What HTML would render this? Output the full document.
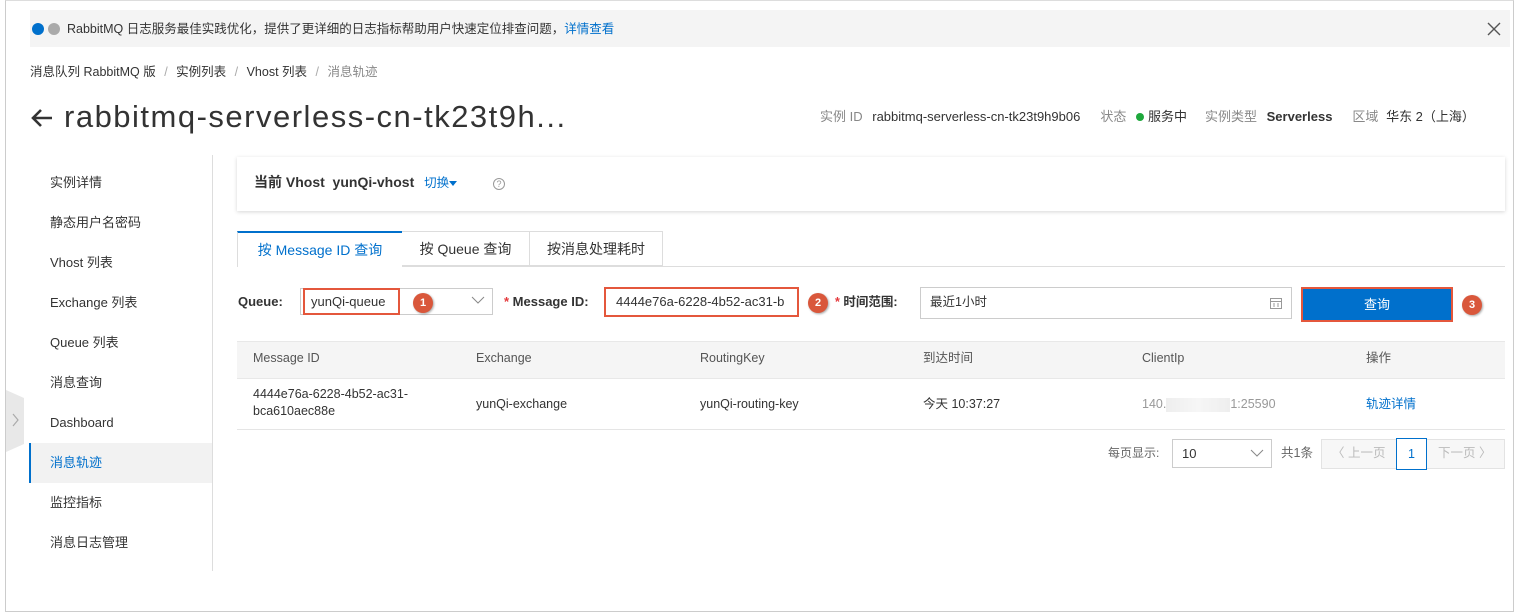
<!DOCTYPE html>
<html><head><meta charset="utf-8">
<style>
*{box-sizing:border-box;margin:0;padding:0}
body{width:1515px;height:613px;background:#fff;font-family:"Liberation Sans","Noto Sans CJK SC",sans-serif;font-size:12px;line-height:16px;color:#333;position:relative;overflow:hidden}
.a{position:absolute;white-space:nowrap}
.frame{position:absolute;left:5px;top:0;width:1509px;height:612px;border:1px solid #ccc;border-top:1px solid #ddd}
.badge{position:absolute;width:20px;height:20px;border-radius:50%;background:#d9573b;color:#fff;font-size:11px;font-weight:bold;text-align:center;line-height:20px;box-shadow:1px 1px 2px rgba(0,0,0,.35)}
.side{position:absolute;left:50px;font-size:13px;color:#333;line-height:16px}
.th{position:absolute;top:350px;color:#555;font-size:12.5px}
.td{position:absolute;color:#333;font-size:12.5px}
.red{border:2px solid #e4573c}
</style></head><body>
<div class="frame"></div>
<div class="a" style="left:30px;top:10px;width:1480px;height:37px;background:#f4f4f4"></div>
<div class="a" style="left:32px;top:23px;width:12px;height:12px;border-radius:50%;background:#0070cc"></div>
<div class="a" style="left:48px;top:23px;width:12px;height:12px;border-radius:50%;background:#aaa"></div>
<div class="a" style="left:67px;top:21px;font-size:12.5px;color:#333">RabbitMQ 日志服务最佳实践优化，提供了更详细的日志指标帮助用户快速定位排查问题，<span style="color:#0070cc">详情查看</span></div>
<svg class="a" style="left:1487px;top:22px" width="14" height="14"><path d="M1 1L13 13M13 1L1 13" stroke="#555" stroke-width="1.4"/></svg>
<div class="a" style="left:30px;top:64px;font-size:12.5px;color:#333">消息队列 RabbitMQ 版 <span style="color:#aaa;margin:0 5px">/</span> 实例列表 <span style="color:#aaa;margin:0 5px">/</span> Vhost 列表 <span style="color:#aaa;margin:0 5px">/</span> <span style="color:#888">消息轨迹</span></div>
<svg class="a" style="left:30px;top:107px" width="24" height="22"><path d="M22 11H3M11 3L3 11L11 19" stroke="#333" stroke-width="2.6" fill="none"/></svg>
<div class="a" style="left:64px;top:99px;font-size:31px;line-height:36px;color:#333;letter-spacing:1.5px">rabbitmq-serverless-cn-tk23t9h...</div>
<div class="a" style="left:820px;top:109px;font-size:13px;color:#888">实例 ID <span style="color:#333;margin-left:6px">rabbitmq-serverless-cn-tk23t9h9b06</span><span style="margin-left:20px">状态</span> <span style="display:inline-block;width:8px;height:8px;border-radius:50%;background:#1ea83c;margin:0 4px 0 6px"></span><span style="color:#333">服务中</span><span style="margin-left:18px">实例类型</span> <b style="color:#333;margin-left:6px;font-size:13px">Serverless</b><span style="margin-left:20px">区域</span> <span style="color:#333;margin-left:4px">华东 2（上海）</span></div>
<div class="a" style="left:212px;top:155px;width:1px;height:416px;background:#ddd"></div>
<div class="a" style="left:29px;top:443px;width:183px;height:40px;background:#f2f2f2;border-left:2px solid #0070cc"></div>
<div class="side" style="top:175px">实例详情</div>
<div class="side" style="top:215px">静态用户名密码</div>
<div class="side" style="top:255px">Vhost 列表</div>
<div class="side" style="top:295px">Exchange 列表</div>
<div class="side" style="top:335px">Queue 列表</div>
<div class="side" style="top:375px">消息查询</div>
<div class="side" style="top:415px">Dashboard</div>
<div class="side" style="top:455px;color:#0070cc">消息轨迹</div>
<div class="side" style="top:495px">监控指标</div>
<div class="side" style="top:535px">消息日志管理</div>
<svg class="a" style="left:6px;top:390px" width="19" height="62"><path d="M0 0L18 8V54L0 62Z" fill="#e8e8e8"/><path d="M7 24L12 30L7 36" stroke="#aaa" fill="none" stroke-width="1.2"/></svg>
<div class="a" style="left:237px;top:157px;width:1268px;height:54px;background:#fff;box-shadow:0 1px 4px rgba(0,0,0,.16)"></div>
<div class="a" style="left:254px;top:174px;font-size:14px;font-weight:bold;color:#333">当前 Vhost &nbsp;yunQi-vhost <span style="font-weight:normal;font-size:12.5px;color:#0070cc;margin-left:6px">切换</span><span style="display:inline-block;width:0;height:0;border-left:4px solid transparent;border-right:4px solid transparent;border-top:5px solid #0070cc;vertical-align:middle"></span></div>
<div class="a" style="left:493px;top:178px;width:12px;height:12px;border:1px solid #999;border-radius:50%;font-size:9px;color:#999;text-align:center;line-height:10px">?</div>
<div class="a" style="left:237px;top:266px;width:1268px;height:1px;background:#ddd"></div>
<div class="a" style="left:237px;top:231px;width:165px;height:36px;border-top:2px solid #0070cc;border-left:1px solid #ddd;background:#fff;color:#0070cc;font-size:14px;text-align:center;line-height:34px">按 Message ID 查询</div>
<div class="a" style="left:402px;top:231px;width:128px;height:35px;border:1px solid #ddd;border-left:none;font-size:14px;color:#333;text-align:center;line-height:35px">按 Queue 查询</div>
<div class="a" style="left:530px;top:231px;width:133px;height:35px;border:1px solid #ddd;border-left:none;font-size:14px;color:#333;text-align:center;line-height:35px">按消息处理耗时</div>
<div class="a" style="left:238px;top:294px;font-size:13px;font-weight:bold;color:#333">Queue:</div>
<div class="a" style="left:300px;top:288px;width:193px;height:27px;border:1px solid #ccc"></div>
<svg class="a" style="left:471px;top:295px" width="14" height="10"><path d="M1 2L7 8L13 2" stroke="#888" fill="none"/></svg>
<div class="a red" style="left:303px;top:288px;width:97px;height:27px;font-size:13px;line-height:23px;padding-left:6px">yunQi-queue</div>
<div class="badge" style="left:413px;top:293px">1</div>
<div class="a" style="left:504px;top:294px;font-size:13px;font-weight:bold;color:#333"><span style="color:#e4393c">*</span> Message ID:</div>
<div class="a red" style="left:604px;top:287px;width:195px;height:30px;font-size:13px;line-height:26px;padding-left:10px">4444e76a-6228-4b52-ac31-b</div>
<div class="badge" style="left:808px;top:293px">2</div>
<div class="a" style="left:835px;top:294px;font-size:12.5px;font-weight:bold;color:#333"><span style="color:#e4393c">*</span> 时间范围:</div>
<div class="a" style="left:920px;top:287px;width:372px;height:32px;border:1px solid #ccc;font-size:12.5px;line-height:28px;padding-left:9px">最近1小时</div>
<svg class="a" style="left:1270px;top:297px" width="12" height="12"><rect x="0.5" y="1.5" width="11" height="10" fill="none" stroke="#999"/><path d="M0 4.5H12M3 7H5M7 7H9M3 9H5M7 9H9" stroke="#999"/></svg>
<div class="a" style="left:1301px;top:287px;width:152px;height:35px;border:2px solid #e4573c;background:#0070cc;color:#fff;font-size:13px;text-align:center;line-height:31px">查询</div>
<div class="badge" style="left:1462px;top:295px">3</div>
<div class="a" style="left:237px;top:341px;width:1268px;height:38px;background:#f5f5f5;border-top:1px solid #e8e8e8;border-bottom:1px solid #e8e8e8"></div>
<div class="th" style="left:253px">Message ID</div>
<div class="th" style="left:476px">Exchange</div>
<div class="th" style="left:700px">RoutingKey</div>
<div class="th" style="left:923px">到达时间</div>
<div class="th" style="left:1142px">ClientIp</div>
<div class="th" style="left:1366px">操作</div>
<div class="td" style="left:253px;top:386px;line-height:17px">4444e76a-6228-4b52-ac31-<br>bca610aec88e</div>
<div class="td" style="left:476px;top:396px">yunQi-exchange</div>
<div class="td" style="left:700px;top:396px">yunQi-routing-key</div>
<div class="td" style="left:923px;top:396px">今天 10:37:27</div>
<div class="td" style="left:1142px;top:396px;color:#999">140.<span style="display:inline-block;width:64px;height:14px;background:linear-gradient(90deg,#eee,#f6f6f6,#eee);vertical-align:middle"></span>1:25590</div>
<div class="td" style="left:1366px;top:396px;color:#0070cc">轨迹详情</div>
<div class="a" style="left:237px;top:429px;width:1268px;height:1px;background:#e5e5e5"></div>
<div class="a" style="left:1108px;top:445px;font-size:12px;color:#666">每页显示:</div>
<div class="a" style="left:1172px;top:439px;width:100px;height:29px;border:1px solid #ccc;font-size:13px;line-height:27px;padding-left:9px">10</div>
<svg class="a" style="left:1250px;top:448px" width="14" height="10"><path d="M1 2L7 8L13 2" stroke="#888" fill="none"/></svg>
<div class="a" style="left:1281px;top:445px;font-size:12.5px;color:#666">共1条</div>
<div class="a" style="left:1321px;top:439px;width:184px;height:30px;border:1px solid #e3e3e3;background:#f7f7f7"></div>
<div class="a" style="left:1332px;top:445px;font-size:12.5px;color:#bbb">〈 上一页</div>
<div class="a" style="left:1396px;top:438px;width:31px;height:32px;border:1px solid #0070cc;background:#fff;color:#0070cc;font-size:12.5px;text-align:center;line-height:30px">1</div>
<div class="a" style="left:1438px;top:445px;font-size:12.5px;color:#bbb">下一页 〉</div>
</body></html>
